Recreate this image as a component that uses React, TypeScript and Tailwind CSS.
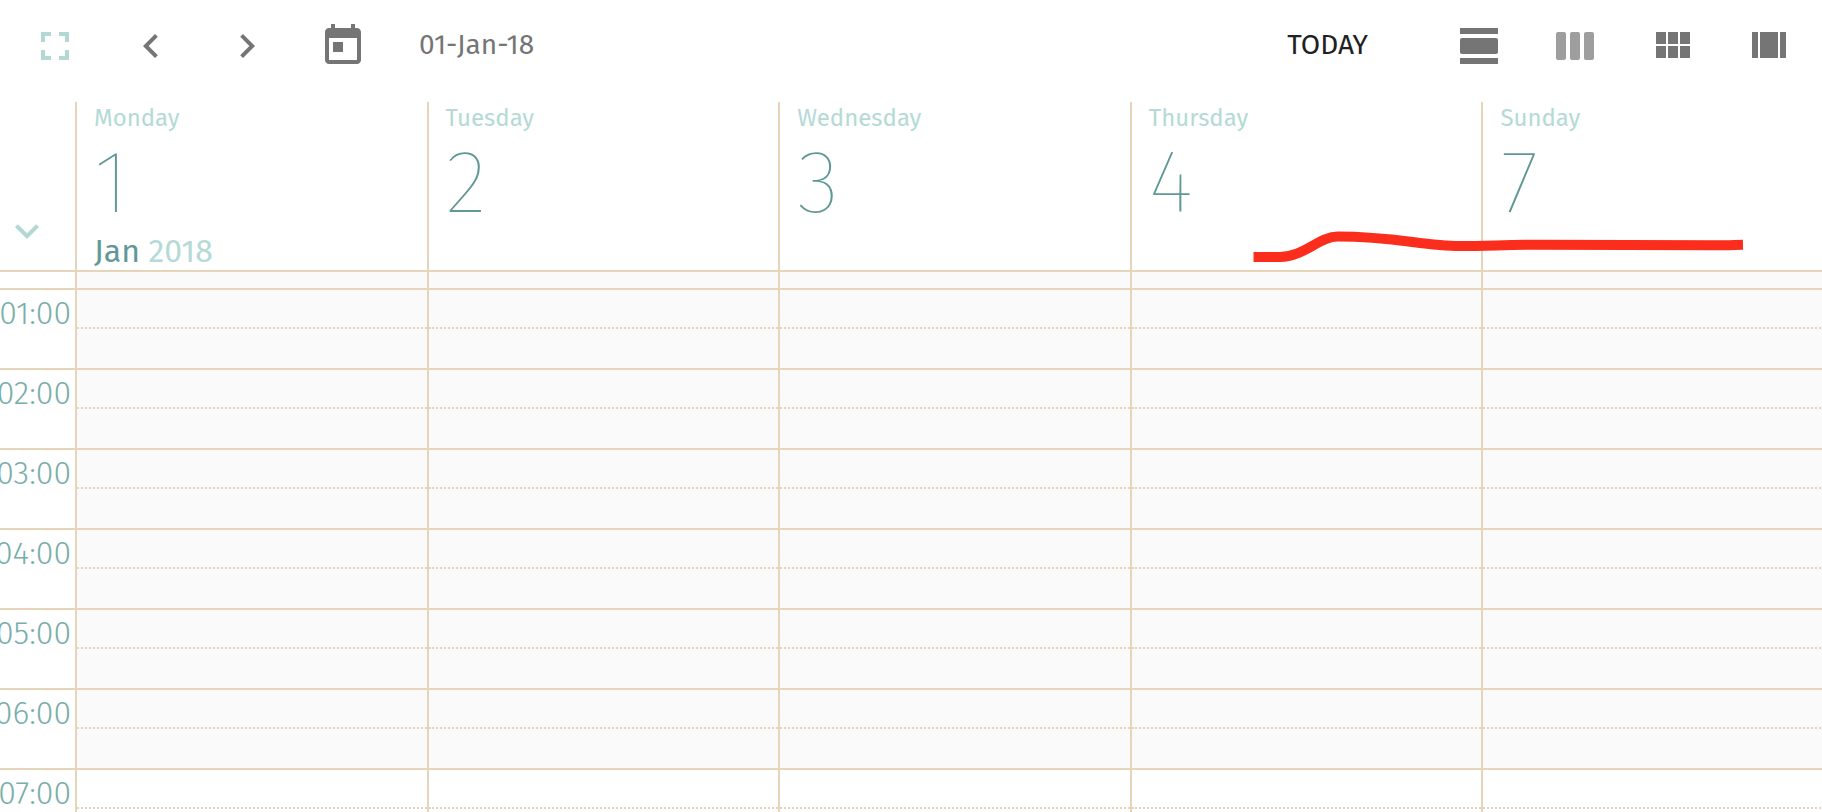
import type { ReactNode } from 'react';

interface Day {
  name: string;
  date: number;
  month?: string;
  year?: number;
}

const DAYS: Day[] = [
  { name: 'Monday', date: 1, month: 'Jan', year: 2018 },
  { name: 'Tuesday', date: 2 },
  { name: 'Wednesday', date: 3 },
  { name: 'Thursday', date: 4 },
  { name: 'Sunday', date: 7 },
];

const HOURS = ['01:00', '02:00', '03:00', '04:00', '05:00', '06:00', '07:00'];
const WORK_START = '07:00';

const ICONS = {
  fullscreen: 'M7 14H5v5h5v-2H7v-3zm-2-4h2V7h3V5H5v5zm12 7h-3v2h5v-5h-2v3zM14 5v2h3v3h2V5h-5z',
  prev: 'M15.41 7.41L14 6l-6 6 6 6 1.41-1.41L10.83 12z',
  next: 'M10 6L8.59 7.41 13.17 12l-4.58 4.59L10 18l6-6z',
  expand: 'M16.59 8.59L12 13.17 7.41 8.59 6 10l6 6 6-6z',
  today: 'M19 3h-1V1h-2v2H8V1H6v2H5c-1.11 0-1.99.9-1.99 2L3 19c0 1.1.89 2 2 2h14c1.1 0 2-.9 2-2V5c0-1.1-.9-2-2-2zm0 16H5V8h14v11zM7 10h5v5H7z',
  day: 'M2 21h19v-3H2v3zM20 8H3c-.55 0-1 .45-1 1v6c0 .55.45 1 1 1h17c.55 0 1-.45 1-1V9c0-.55-.45-1-1-1zM2 3v3h19V3H2z',
  week: 'M6 5H3c-.55 0-1 .45-1 1v12c0 .55.45 1 1 1h3c.55 0 1-.45 1-1V6c0-.55-.45-1-1-1zm14 0h-3c-.55 0-1 .45-1 1v12c0 .55.45 1 1 1h3c.55 0 1-.45 1-1V6c0-.55-.45-1-1-1zm-7 0h-3c-.55 0-1 .45-1 1v12c0 .55.45 1 1 1h3c.55 0 1-.45 1-1V6c0-.55-.45-1-1-1z',
  month: 'M4 11h5V5H4v6zm0 7h5v-6H4v6zm6 0h5v-6h-5v6zm6 0h5v-6h-5v6zm-6-7h5V5h-5v6zm6-6v6h5V5h-5z',
  agenda: 'M4 18h3V5H4v13zM18 5v13h3V5h-3zM8 18h9V5H8v13z',
};

function Icon({ name }: { name: keyof typeof ICONS }) {
  return (
    <svg viewBox="0 0 24 24" className="size-12 fill-current" aria-hidden="true">
      <path d={ICONS[name]} />
    </svg>
  );
}

function ToolButton({ label, className = 'text-[#757575]', disabled, children }: {
  label: string;
  className?: string;
  disabled?: boolean;
  children: ReactNode;
}) {
  return (
    <button
      aria-label={label}
      disabled={disabled}
      className={`flex h-23 w-24 shrink-0 items-center justify-center ${className}`}
    >
      {children}
    </button>
  );
}

function Toolbar() {
  return (
    <header className="mb-2.5 flex items-center justify-between pr-1.5 pl-[7px]">
      <div className="flex items-center">
        <ToolButton label="Full screen" className="text-[#b2d8d3]"><Icon name="fullscreen" /></ToolButton>
        <ToolButton label="Previous"><Icon name="prev" /></ToolButton>
        <ToolButton label="Next"><Icon name="next" /></ToolButton>
        <ToolButton label="Pick a date"><Icon name="today" /></ToolButton>
        <span className="ml-7 pb-0.5 text-[28px] text-[#757575]">01-Jan-18</span>
      </div>
      <div className="flex items-center">
        <button className="h-23 px-16 pb-0.5 text-[28px] text-[#212121]">TODAY</button>
        <ToolButton label="Day view"><Icon name="day" /></ToolButton>
        <ToolButton label="Week view" className="text-[#9e9e9e]" disabled><Icon name="week" /></ToolButton>
        <ToolButton label="Month view"><Icon name="month" /></ToolButton>
        <ToolButton label="Agenda view"><Icon name="agenda" /></ToolButton>
      </div>
    </header>
  );
}

function DayHeader({ day }: { day: Day }) {
  return (
    <th scope="col" className="border-b-2 border-l-2 border-[#e6d5b8] p-0 pl-[17px] text-left align-top">
      <div className="h-8 text-2xl leading-8 font-normal text-[#b5dad6]">{day.name}</div>
      <div className="h-24 text-[88px] leading-[98px] font-thin text-[#5f9896]">{day.date}</div>
      {day.month && (
        <div className="h-10 text-[32px] leading-[42px] font-normal text-[#b5dad6]">
          <span className="text-[#5f9896]">{day.month}</span> {day.year}
        </div>
      )}
    </th>
  );
}

function HourRow({ hour }: { hour: string }) {
  const shade = hour < WORK_START ? 'bg-[#fafafa]' : 'bg-white';
  return (
    <tr className="h-20">
      <th scope="row" className="border-b-2 border-[#e6d5b8] p-0 align-top">
        <div className="flex h-[46px] items-center justify-end pr-1 text-[32px] font-light whitespace-nowrap text-[#78aeaa]">
          {hour}
        </div>
      </th>
      {DAYS.map((d) => (
        <td key={d.name} className={`border-b-2 border-l-2 border-[#e6d5b8] p-0 align-top ${shade}`}>
          <div className="h-[39px] border-b-2 border-dotted border-[#e6d5b8]" />
        </td>
      ))}
    </tr>
  );
}

export default function App() {
  return (
    <div className="relative h-screen overflow-hidden bg-white font-['Fira_Sans','Noto_Sans',sans-serif]">
      <Toolbar />
      <table className="w-[calc(100%+11px)] table-fixed border-separate border-spacing-0">
        <thead>
          <tr className="h-[170px]">
            <th className="w-[75px] border-b-2 border-[#e6d5b8] p-0 pb-[15px] pl-[3px] align-bottom">
              <button aria-label="Expand" className="block text-[#b2d8d3]"><Icon name="expand" /></button>
            </th>
            {DAYS.map((d) => <DayHeader key={d.name} day={d} />)}
          </tr>
        </thead>
        <tbody>
          <tr className="h-[18px]">
            <td className="border-b-2 border-[#e6d5b8] p-0" />
            {DAYS.map((d) => (
              <td key={d.name} className="border-b-2 border-l-2 border-[#e6d5b8] bg-[#fafafa] p-0" />
            ))}
          </tr>
          {HOURS.map((h) => <HourRow key={h} hour={h} />)}
        </tbody>
      </table>

      {/* freehand marker stroke */}
      <svg
        viewBox="0 0 490 40"
        className="pointer-events-none absolute top-[225px] right-[79px] h-10 w-[490px]"
        aria-hidden="true"
      >
        <path
          d="M0.5 32H27C51 32 66 11.5 85 11.5C142 11.5 170 21 207 21C236 21 256 19.5 287 19.8C340 20.5 400 20.3 460 20.3C471 20.3 480 20 490 19.8"
          fill="none"
          stroke="#fb2d1c"
          strokeWidth="10"
        />
      </svg>
    </div>
  );
}
